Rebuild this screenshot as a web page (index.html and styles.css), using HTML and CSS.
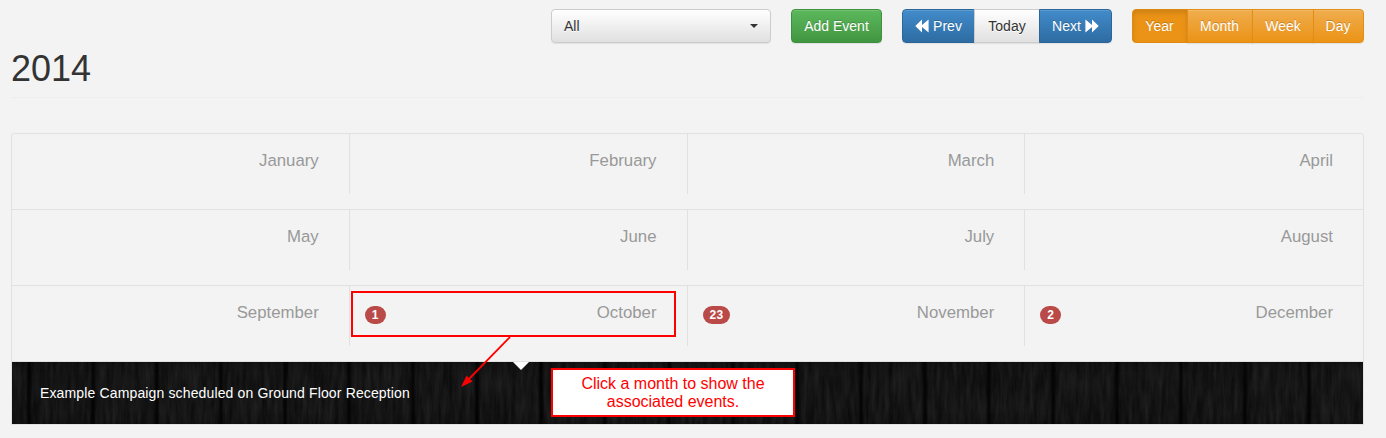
FILE: index.html
```html
<!DOCTYPE html>
<html lang="en">
<head>
<meta charset="utf-8">
<title>Calendar</title>
<link rel="stylesheet" href="styles.css">
</head>
<body>
<div class="page">
  <div class="toolbar">
    <button class="btn btn-default select"><span>All</span><span class="caret"></span></button>
    <button class="btn btn-success">Add Event</button>
    <div class="group nav-group">
      <button class="btn btn-primary prev"><svg class="icon" viewBox="0 0 14 14"><path d="M7 .5v5.600L13.600 .5v13L7 7.900v5.600L.3 7z"/></svg>Prev</button>
      <button class="btn btn-default today">Today</button>
      <button class="btn btn-primary next">Next<svg class="icon" viewBox="0 0 14 14"><path d="M7 .5v5.600L.4 .5v13L7 7.900v5.600L13.700 7z"/></svg></button>
    </div>
    <div class="group view-group">
      <button class="btn btn-warning year active">Year</button>
      <button class="btn btn-warning month-view">Month</button>
      <button class="btn btn-warning week">Week</button>
      <button class="btn btn-warning day">Day</button>
    </div>
  </div>
  <h1 class="title">2014</h1>
  <div class="calendar">
    <div class="row">
      <div class="month">January</div><div class="month">February</div><div class="month">March</div><div class="month">April</div>
    </div>
    <div class="row">
      <div class="month">May</div><div class="month">June</div><div class="month">July</div><div class="month">August</div>
    </div>
    <div class="row">
      <div class="month">September</div>
      <div class="month"><span class="badge">1</span>October</div>
      <div class="month"><span class="badge">23</span>November</div>
      <div class="month"><span class="badge">2</span>December</div>
    </div>
    <div class="events">
      <svg class="grain" width="1351" height="62">
        <filter id="grain" x="0" y="0" width="100%" height="100%" color-interpolation-filters="sRGB">
          <feTurbulence type="fractalNoise" baseFrequency="0.22 0.03" numOctaves="4" seed="8"/>
          <feColorMatrix values=".11 0 0 0 .028  .11 0 0 0 .028  .11 0 0 0 .028  0 0 0 0 1"/>
        </filter>
        <rect width="1351" height="62" filter="url(#grain)"/>
      </svg>
      <div class="planks"></div>
      <span class="tick"></span>
      <a class="event">Example Campaign scheduled on Ground Floor Reception</a>
    </div>
  </div>
</div>
<div class="highlight"></div>
<svg class="arrow" width="60" height="60" viewBox="0 0 60 60"><path d="M54 0 12 43" stroke="#f00" stroke-width="1.800"/><path d="M5 50 10.500 38.800 16.500 44.600z" fill="#f00"/></svg>
<div class="callout">Click a month to show the associated events.</div>
</body>
</html>
```
FILE: styles.css
```css
* { box-sizing: border-box; }
body {
  margin: 0;
  height: 438px;
  overflow: hidden;
  background: #f3f3f3;
  color: #333;
  font: 14px/20px "Liberation Sans", Arial, sans-serif;
}
.page { width: 1353px; margin-left: 11px; padding-top: 9px; }
.toolbar { display: flex; justify-content: flex-end; gap: 20px; height: 34px; }
.group { display: flex; }
.btn {
  height: 34px;
  padding: 0;
  border: 1px solid;
  border-radius: 4px;
  font: inherit;
  color: #fff;
  display: flex;
  align-items: center;
  justify-content: center;
  box-shadow: inset 0 1px 0 rgba(255,255,255,.15), 0 1px 1px rgba(0,0,0,.075);
}
.btn-default { color: #333; border-color: #ccc; background: linear-gradient(#fff, #e0e0e0); text-shadow: 0 1px 0 #fff; }
.btn-success { width: 91px; border-color: #3e8f3e; background: linear-gradient(#5cb85c, #419641); text-shadow: 0 -1px 0 rgba(0,0,0,.2); }
.btn-primary { border-color: #2b669a; background: linear-gradient(#428bca, #2d6ca2); text-shadow: 0 -1px 0 rgba(0,0,0,.2); }
.btn-warning { border-color: #e38d13; background: linear-gradient(#f0ad4e, #eb9316); text-shadow: 0 -1px 0 rgba(0,0,0,.2); }
.btn-warning.active { background: #eb9316; border-color: #de8a10; box-shadow: inset 0 3px 5px rgba(0,0,0,.125); }
.group .btn:not(:first-child) { margin-left: -1px; border-top-left-radius: 0; border-bottom-left-radius: 0; }
.group .btn:not(:last-child) { border-top-right-radius: 0; border-bottom-right-radius: 0; }
.select { width: 220px; justify-content: space-between; padding: 0 12px; }
.caret { border: 4px solid transparent; border-top-color: #333; border-bottom: 0; }
.prev { width: 73px; gap: 4px; }
.today { width: 66px; }
.next { width: 73px; gap: 4px; }
.year { width: 56px; padding-right: 1px; }
.month-view { width: 66px; padding-right: 1px; }
.week { width: 62px; }
.day { width: 51px; padding-right: 1px; }
.icon { width: 14px; height: 14px; fill: #fff; }
.title {
  margin: 0 0 35px;
  height: 55px;
  padding-top: 6px;
  border-bottom: 1px solid #eee;
  font-size: 36px;
  font-weight: 400;
  line-height: 40px;
}
.calendar { border: 1px solid #e1e1e1; border-radius: 3px 3px 0 0; }
.row { display: grid; grid-template-columns: repeat(4, 1fr); height: 76px; border-bottom: 1px solid #e1e1e1; }
.month {
  display: flex;
  justify-content: flex-end;
  height: 60px;
  padding: 15px 30px 0 15px;
  border-right: 1px solid #e1e1e1;
  color: #999;
  font-size: 16.8px;
  line-height: 24px;
}
.month:last-child { border-right: 0; }
.badge {
  height: 18px;
  margin: 5px auto 0 0;
  padding: 3px 7px;
  border-radius: 10px;
  background: #b94a48;
  color: #fff;
  font-size: 12px;
  font-weight: 700;
  line-height: 12px;
  letter-spacing: .3px;
}
.events { position: relative; height: 62px; padding: 21px 28px; overflow: hidden; background: #151515; }
.grain { position: absolute; left: 0; top: 0; }
.planks {
  position: absolute;
  inset: 0;
  background: repeating-linear-gradient(90deg, transparent 0, transparent 13px, rgba(0,0,0,.3) 15px, rgba(0,0,0,.75) 16px, rgba(0,0,0,.7) 18px, rgba(0,0,0,.1) 20px, transparent 26px, transparent 64px);
  box-shadow: inset 0 0 8px rgba(0,0,0,.35);
}
.tick { position: absolute; left: 500.5px; top: 0; border: 8px solid transparent; border-top-color: #fff; border-bottom: 0; }
.event { position: relative; color: #fff; letter-spacing: .14px; }
.highlight { position: absolute; left: 351px; top: 291px; width: 325px; height: 46px; border: 2px solid #f00; }
.arrow { position: absolute; left: 456px; top: 337px; }
.callout {
  position: absolute;
  left: 551px;
  top: 368px;
  width: 244px;
  height: 49px;
  padding: 5px 28px;
  border: 2px solid #f00;
  background: #fff;
  color: #f00;
  font-size: 16px;
  line-height: 18px;
  text-align: center;
}
```
